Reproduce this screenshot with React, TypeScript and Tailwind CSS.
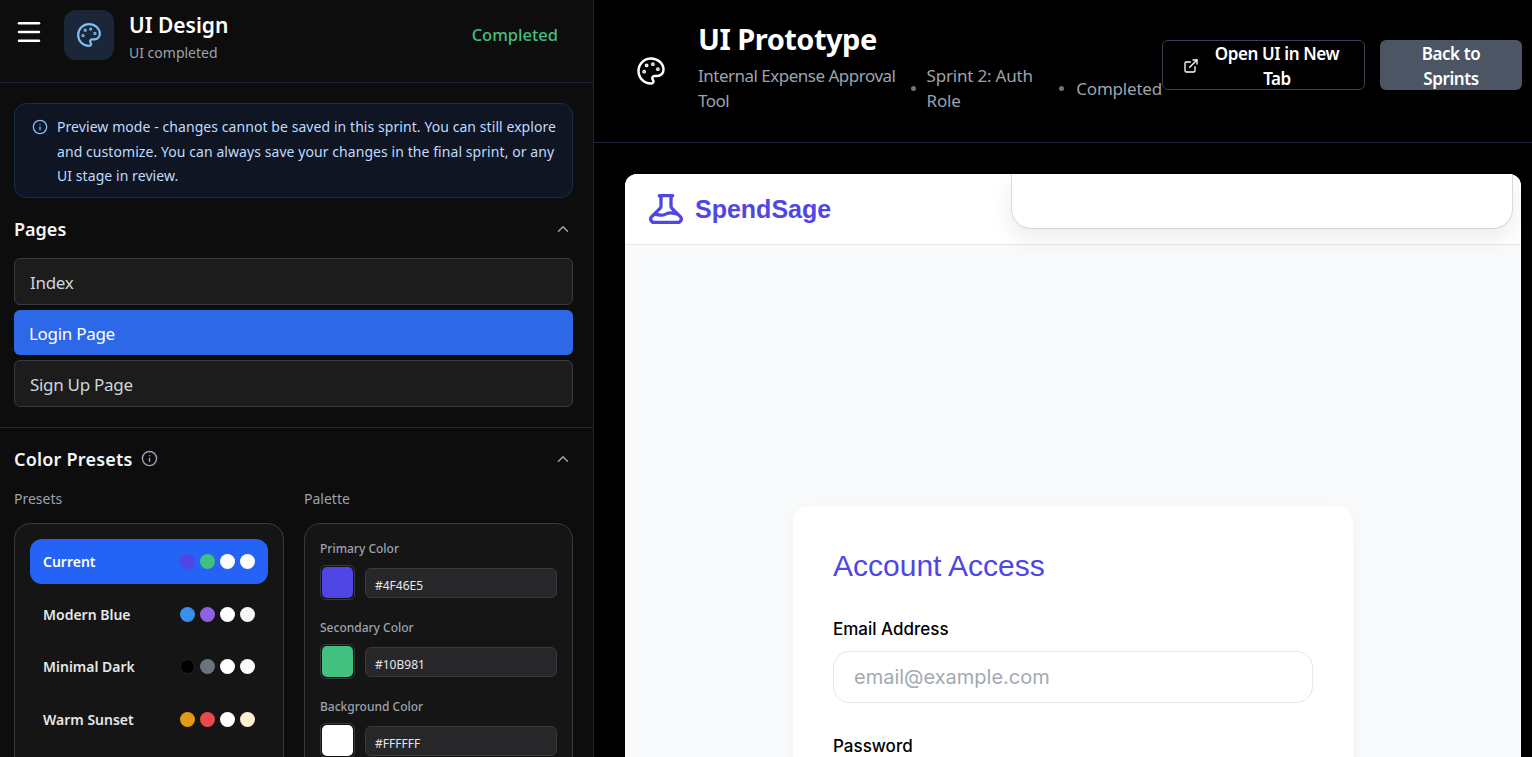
import { ChevronUp, ExternalLink, Info, Menu, Palette } from "lucide-react";

const pages = [
  { name: "Index", active: false },
  { name: "Login Page", active: true },
  { name: "Sign Up Page", active: false },
];

const presets = [
  { name: "Current", colors: ["bg-[#4f46e5]", "bg-[#41c07f]", "bg-white", "bg-white"] },
  { name: "Modern Blue", colors: ["bg-[#3b8eea]", "bg-[#8f62e4]", "bg-white", "bg-[#f3f4f6]"] },
  { name: "Minimal Dark", colors: ["bg-black", "bg-[#6b7280]", "bg-white", "bg-[#f9fafb]"] },
  { name: "Warm Sunset", colors: ["bg-[#e19a17]", "bg-[#e94a4a]", "bg-white", "bg-[#fdf0d0]"] },
];

const palette = [
  { label: "Primary Color", value: "#4F46E5", swatch: "bg-[#4f46e5]" },
  { label: "Secondary Color", value: "#10B981", swatch: "bg-[#41c07f]" },
  { label: "Background Color", value: "#FFFFFF", swatch: "bg-white" },
];

const Sidebar = () => {
  return (
    <aside className="w-[594px] h-[757px] shrink-0 overflow-hidden bg-[#0d0d0d] border-r border-[#27272a] font-['Noto_Sans',sans-serif]">
      <div className="h-[83px] flex items-center pl-[14px] pr-[35px] pb-[12px] border-b border-[#1c2536]">
        <Menu className="w-[30px] h-[30px] mb-[6px] text-white" strokeWidth={2} />
        <div className="ml-[20px] w-[50px] h-[50px] rounded-xl bg-[#1b2638] flex items-center justify-center">
          <Palette className="w-[26px] h-[26px] text-[#7cc0f5]" />
        </div>
        <div className="ml-[15px] pt-[2px] flex-1">
          <h1 className="text-[21px] leading-[30px] font-semibold text-white">UI Design</h1>
          <p className="mt-[3px] text-[14px] leading-[20px] text-[#9ca3af]">UI completed</p>
        </div>
        <span className="text-[16.5px] font-medium text-[#41c07f]">Completed</span>
      </div>

      <div className="pl-[14px] pr-[20px] pt-[20px]">
        <div className="h-[95px] rounded-xl border border-[#1c2a4a] bg-[#0f1522] pl-[17px] pr-[10px] pt-[11px] flex gap-[9px]">
          <Info className="w-[16px] h-[16px] mt-[4px] shrink-0 text-[#7cc0f5]" />
          <p className="text-[14px] leading-[24.5px] tracking-[0.07px] text-[#bfdbfe]">
            Preview mode - changes cannot be saved in this sprint. You can still explore and customize. You can always save your changes in the final sprint, or any UI stage in review.
          </p>
        </div>

        <div className="mt-[18px] flex items-center justify-between h-[26px]">
          <h2 className="text-[18px] font-semibold text-[#f3f4f6]">Pages</h2>
          <ChevronUp className="w-[18px] h-[18px] mr-[1px] text-[#9ca3af]" />
        </div>
        <div className="mt-[16px] flex flex-col gap-[5px]">
          {pages.map((p) =>
            p.active ? (
              <div key={p.name} className="h-[45px] rounded-md bg-[#2d68e9] px-[15px] pt-[2px] flex items-center text-[17px] tracking-[-0.3px] text-white">
                {p.name}
              </div>
            ) : (
              <div key={p.name} className="h-[47px] rounded-md bg-[#1c1c1c] border border-[#3a3a3e] px-[15px] pt-[2px] flex items-center text-[17px] tracking-[-0.3px] text-[#d1d5db]">
                {p.name}
              </div>
            )
          )}
        </div>
      </div>

      <div className="mt-[20px] border-t border-[#27272a] px-[14px] pt-[17px]">
        <div className="flex items-center justify-between h-[28px] pr-[6px]">
          <div className="flex items-center gap-[8px]">
            <h2 className="text-[18px] tracking-[0.2px] font-semibold text-[#f3f4f6]">Color Presets</h2>
            <Info className="w-[17px] h-[17px] mb-[2px] text-[#9ca3af]" />
          </div>
          <ChevronUp className="w-[18px] h-[18px] mr-[1px] text-[#9ca3af]" />
        </div>

        <div className="mt-[16px] grid grid-cols-[270px_269px] gap-x-[20px]">
          <div>
            <p className="text-[14px] leading-[20px] text-[#9ca3af]">Presets</p>
            <div className="mt-[14px] h-[300px] rounded-2xl border border-[#3a3a3e] bg-[#151515] px-[15px] pt-[15px]">
              {presets.map((preset, i) => (
                <div
                  key={preset.name}
                  className={`h-[45px] mb-[7.5px] rounded-xl pl-[13px] pr-[13px] flex items-center justify-between ${i === 0 ? "bg-[#2463f5] text-white" : "text-[#e5e7eb]"}`}
                >
                  <span className="text-[14px] font-semibold">{preset.name}</span>
                  <span className="flex gap-[5px]">
                    {preset.colors.map((c, j) => (
                      <span key={j} className={`w-[15px] h-[15px] rounded-full ${c} ${c === "bg-black" ? "border border-[#222]" : ""}`} />
                    ))}
                  </span>
                </div>
              ))}
            </div>
          </div>

          <div>
            <p className="text-[14px] leading-[20px] text-[#9ca3af]">Palette</p>
            <div className="mt-[14px] h-[300px] rounded-2xl border border-[#3a3a3e] bg-[#151515] px-[15px] pt-[16px]">
              {palette.map((item) => (
                <div key={item.label} className="mb-[19px]">
                  <p className="text-[12px] leading-[17px] font-medium text-[#9ca3af]">{item.label}</p>
                  <div className="mt-[8px] flex items-center gap-[10px]">
                    <span className="w-[35px] h-[35px] rounded-md border border-[#3a3a3e] bg-[#111] p-[1px]">
                      <span className={`block w-full h-full rounded-[5px] ${item.swatch}`} />
                    </span>
                    <span className="flex-1 h-[30px] rounded-md border border-[#3a3a3e] bg-[#27272a] px-[9px] pt-[7px] flex items-center text-[12px] text-[#e5e7eb]">
                      {item.value}
                    </span>
                  </div>
                </div>
              ))}
            </div>
          </div>
        </div>
      </div>
    </aside>
  );
};

const Preview = () => {
  return (
    <div className="relative ml-[31px] mr-[11px] h-[583px] overflow-hidden rounded-t-xl bg-[#f9fafb]">
      <div className="h-[71px] bg-white border-b border-[#e5e7eb] flex items-center pl-[21px] gap-[9px]">
        <svg viewBox="0 0 24 24" fill="none" stroke="#4f46e5" strokeWidth={2} strokeLinecap="round" strokeLinejoin="round" className="w-[40px] h-[40px]">
          <path d="M19.428 15.428a2 2 0 00-1.022-.547l-2.387-.477a6 6 0 00-3.86.517l-.318.158a6 6 0 01-3.86.517L6.05 15.21a2 2 0 00-1.806.547M8 4h8l-1 1v5.172a2 2 0 00.586 1.414l5 5c1.26 1.26.367 3.414-1.415 3.414H4.828c-1.782 0-2.674-2.154-1.414-3.414l5-5A2 2 0 009 10.172V5L8 4z" />
        </svg>
        <span className="mt-[2px] text-[25px] font-bold text-[#4f46e5] font-['Liberation_Sans',sans-serif]">SpendSage</span>
      </div>
      <div className="absolute top-0 right-[8px] w-[502px] h-[55px] bg-white rounded-b-[20px] border border-t-0 border-[#d9d6e0] shadow-[0_10px_25px_rgba(0,0,0,0.08)]" />

      <div className="pt-[261px] flex justify-center">
        <div className="w-[560px] h-[400px] rounded-2xl bg-white shadow-[0_4px_20px_rgba(0,0,0,0.04)] px-[40px] pt-[40px] font-['Inter',sans-serif]">
          <h2 className="text-[30px] leading-[40px] font-normal text-[#4f46e5] font-['Liberation_Sans',sans-serif]">Account Access</h2>
          <label className="block mt-[31px] text-[17px] leading-[24px] font-medium text-black">Email Address</label>
          <div className="mt-[10px] h-[52px] rounded-2xl border border-[#e5e7eb] bg-white px-[20px] flex items-center text-[20px] text-[#a3a9b3]">
            email@example.com
          </div>
          <label className="block mt-[31px] text-[17px] leading-[24px] font-medium text-black">Password</label>
        </div>
      </div>
    </div>
  );
};

const App = () => {
  return (
    <div className="w-[1532px] h-[757px] overflow-hidden flex bg-black">
      <Sidebar />
      <main className="flex-1 min-w-0">
        <header className="h-[143px] border-b border-[#1c2536] pl-[42px] pr-[10px] flex items-center font-['Noto_Sans',sans-serif]">
          <Palette className="w-[30px] h-[30px] text-white shrink-0" />
          <div className="ml-[32px] w-[464px] shrink-0 self-start pt-[19px]">
            <h1 className="text-[29px] leading-[40px] font-bold tracking-[-0.5px] text-white">UI Prototype</h1>
            <div className="mt-[4px] flex items-center text-[17px] leading-[25px] tracking-[-0.2px] text-[#9ca3af]">
              <span className="w-[204px] tracking-[-0.5px]">Internal Expense Approval Tool</span>
              <span className="w-[5px] h-[5px] ml-[9px] mr-[11px] rounded-full bg-[#6b7280]" />
              <span className="w-[122px]">Sprint 2: Auth Role</span>
              <span className="w-[5px] h-[5px] ml-[11px] mr-[12px] rounded-full bg-[#6b7280]" />
              <span>Completed</span>
            </div>
          </div>
          <div className="flex gap-[15px] self-start mt-[40px]">
            <button className="w-[203px] h-[50px] rounded-md border border-[#374151] flex items-center gap-[12px] pl-[20px] pr-[21px] pt-[2px] text-[17px] leading-[25px] tracking-[-0.4px] font-semibold text-white">
              <ExternalLink className="w-[16px] h-[16px] shrink-0" />
              <span className="flex-1 text-center">Open UI in New Tab</span>
            </button>
            <button className="w-[142px] h-[50px] rounded-md bg-[#4b5563] flex items-center justify-center px-[24px] pt-[2px] text-[17px] leading-[25px] tracking-[-0.4px] font-semibold text-white">
              Back to Sprints
            </button>
          </div>
        </header>
        <div className="pt-[31px]">
          <Preview />
        </div>
      </main>
    </div>
  );
};

export default App;
